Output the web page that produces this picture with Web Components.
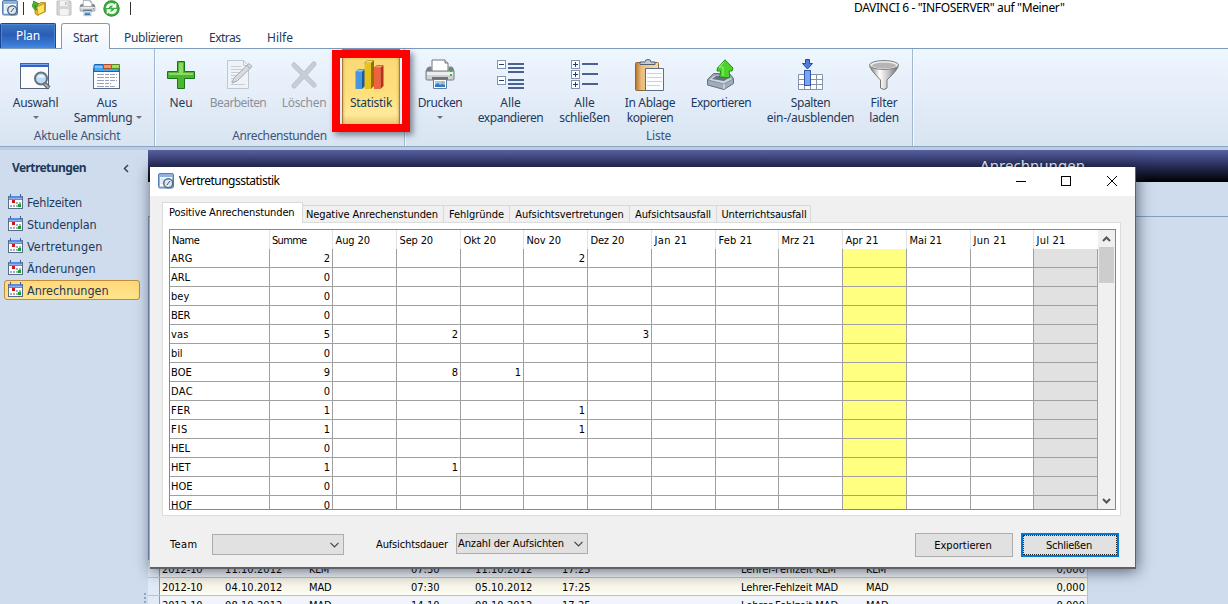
<!DOCTYPE html>
<html lang="de">
<head>
<meta charset="utf-8">
<title>DAVINCI 6</title>
<style>
html,body{margin:0;padding:0;width:1228px;height:604px;overflow:hidden;background:#fff;font-family:"Noto Sans","Open Sans",sans-serif;font-size:12px;color:#1e395b}
</style>
</head>
<body>
<davinci-app></davinci-app>
<script>
const define=(name,html,setup)=>customElements.define(name,class extends HTMLElement{
  connectedCallback(){
    if(this.shadowRoot)return;
    const root=this.attachShadow({mode:'open'});
    const t=document.createElement('template');
    t.innerHTML=typeof html==='function'?html(this):html;
    root.append(t.content.cloneNode(true));
    if(setup)setup(this,root);
  }
});

/* A text run of a given width: letter spacing takes up the difference. */
define('fit-text','<style>:host{display:inline-block;white-space:pre;text-align:left}span{display:inline-block}</style><span><slot></slot></span>',(el,root)=>{
  const w=+el.getAttribute('w'),s=root.querySelector('span'),n=el.textContent.length;
  if(!w)return;
  const nat=s.getBoundingClientRect().width;
  s.style.letterSpacing=((w-nat)/n).toFixed(3)+'px';
  el.style.width=w+'px';
});

const printer=`<path d="M8 1h13l3 3v9H8z" fill="#fff" stroke="#6b7683"/><path d="M21 1v3h3" fill="#dfe6ee" stroke="#6b7683"/><path d="M5 8h2v4h18V8h3l2 4v8q0 1-1 1H3q-1 0-1-1v-8z" fill="#cfd1d4" stroke="#777b82"/><path d="M3 8.500h4v4H2zM25 8.500h4l1 4h-5z" fill="#7b7e84"/><path d="M3 13h26v3H3z" fill="#eceded"/><rect x="26" y="11" width="2" height="2" fill="#30c030"/><rect x="26" y="15" width="2" height="2" fill="#30c030"/><path d="M8 18h16v3H8z" fill="#6c717a"/><path d="M9.500 20.500h13v9h-13z" fill="#fff" stroke="#5a7fa8"/><path d="M11 22h10v6H11z" fill="#8fd0f5"/><path d="M11 28v-2l3-2 2 2 2-1 3 1v2z" fill="#3a78b8"/><circle cx="19" cy="23.500" r="1.200" fill="#f6a04a"/>`;
const ICONS={
select:`<rect x="1.500" y="4.500" width="28" height="25" fill="#fbfcfe" stroke="#54627c"/><rect x="1" y="4" width="29" height="4" fill="#3463c4"/><rect x="2" y="5" width="27" height="1" fill="#7fa5ee"/><path d="M25 24l5 5" stroke="#565c66" stroke-width="4.200"/><path d="M25 24l4.500 4.500" stroke="#b0b5bb" stroke-width="2"/><circle cx="22" cy="19.500" r="6" fill="#bcdcf5" stroke="#68707c" stroke-width="2"/><path d="M18 18q4-4 8 0-4 1-8 0" fill="#eef8ff"/>`,
collection:`<rect x="2.500" y="9.500" width="26" height="20" fill="#fdfdff" stroke="#566885"/><path d="M3 6.500q0-1 1-1h8v4h16v3H3z" fill="#48a5f4" stroke="#1b62b7"/><path d="M12.500 5.500h8v4h-8z" fill="#f79468" stroke="#a94d2c"/><path d="M20.500 5.500h8v4h-8z" fill="#a6dc60" stroke="#55882b"/><path d="M4 8h8" stroke="#b5e0ff"/><path d="M6 15.500h20M6 18.500h20M6 21.500h20M6 24.500h14M6 27.500h18" stroke="#97a3bd" stroke-dasharray="7 1 4 1 5 1"/>`,
plus:`<path d="M12.500 2.500h7v10h10v7h-10v10h-7v-10h-10v-7h10z" fill="#4fb52e" stroke="#15751a"/><path d="M14 4h4v10h10v2H4v-2h10z" fill="#9be272" opacity=".8"/>`,
edit:`<path d="M5.500 1.500h16l5 5v23h-21z" fill="#eff2f7" stroke="#c0c7d1"/><path d="M21.500 1.500v5h5" fill="none" stroke="#c0c7d1"/><path d="M9 7.500h10M9 10.500h13M9 13.500h13M9 16.500h12M9 19.500h9M9 22.500h5M9 25.500h14" stroke="#c7ced7"/><path d="M10 24l2-5L27 4.500l3 3-15 14.500z" fill="#d8dce1" stroke="#a3aab4"/><path d="M25 6.500l3 3" stroke="#9aa2ad"/>`,
del:`<path d="M6 6l20 20M26 5L6 27" stroke="#bcc0c8" stroke-width="5" stroke-linecap="round"/><path d="M6 6l20 20M26 5L6 27" stroke="#c9cdd4" stroke-width="3.500" stroke-linecap="round"/>`,
stats:`<path d="M1.500 13l3-2.500h6L8 13z" fill="#8fc8f4" stroke="#2c6fae" stroke-width=".6"/><path d="M1.500 13H8v17H1.500z" fill="#4a96de"/><path d="M8 13l3-2.500V27L8 30z" fill="#1c5999"/><path d="M10.500 4l3-2.500h6L17 4z" fill="#ffe573" stroke="#9c7c0c" stroke-width=".6"/><path d="M10.500 4H17v26h-6.500z" fill="#e6c21f"/><path d="M17 4l3-2.500V27l-3 3z" fill="#957200"/><path d="M20 9l3-2.500h6L27 9z" fill="#ff9b7c" stroke="#a63617" stroke-width=".6"/><path d="M20 9h6.500v21H20z" fill="#ef6240"/><path d="M26.500 9l3-2.500V27l-3 3z" fill="#b2331a"/>`,
printer,
expand:`<g fill="#fff" stroke="#8393b2"><rect x="2.500" y="1.500" width="8" height="8"/><rect x="2.500" y="17.500" width="8" height="8"/></g><path d="M4 5.500h5M4 21.500h5" stroke="#203f7b"/><path d="M13 5h16M13 9h16M13 13h16M13 21h16M13 25h16M13 29h16" stroke="#4a628f" stroke-width="2"/>`,
collapse:`<g fill="#fff" stroke="#8393b2"><rect x="2.500" y="1.500" width="8" height="8"/><rect x="2.500" y="11.500" width="8" height="8"/><rect x="2.500" y="21.500" width="8" height="8"/></g><path d="M4 5.500h5M6.500 3v5M4 15.500h5M6.500 13v5M4 25.500h5M6.500 23v5" stroke="#203f7b"/><path d="M13 5h16M13 15h16M13 25h16" stroke="#4a628f" stroke-width="2"/>`,
clip:`<defs><linearGradient id="c"><stop offset="0" stop-color="#b3732b"/><stop offset=".25" stop-color="#e9bd7c"/><stop offset="1" stop-color="#f4dcae"/></linearGradient></defs><rect x="1.500" y="3.500" width="23" height="28" rx="1" fill="url(#c)" stroke="#8d6837"/><path d="M6 5.500V3h5q0-2.500 3-2.500t3 2.500h4v2.500z" fill="#c5cbd3" stroke="#555e69"/><path d="M11.500 9.500h18v22h-18z" fill="#fcfdff" stroke="#5c6c86"/><path d="M13 14.500h15M13 18.500h15M13 22.500h15M13 26.500h13" stroke="#cdd3dc"/>`,
export:`<path d="M2.500 20.500l6-6h16l4 5v5L19 30.500 2.500 26z" fill="#9eacbd" stroke="#65717f"/><path d="M3 21l16 4 9-5-5-4H9z" fill="#cdd6e0" stroke="#758291" stroke-width=".8"/><path d="M7 20l4-3h10l3 2-5 3z" fill="#66727f"/><path d="M19 25v5" stroke="#e6ecf2"/><path d="M20 .8L28 9l-1 3h-3q1 4 .5 7l-10-1q1-3 1-6H12l.5-3z" fill="#4ed12b" stroke="#1d8d1c"/><path d="M19 3l-5 5h4v9" fill="none" stroke="#a3f17c"/>`,
columns:`<path d="M3.500 15.500h24v15h-24zM3.500 20.500h24M3.500 25.500h24M9.500 15.500v15M15.500 15.500v15M21.500 15.500v15" fill="#fff" stroke="#8393ac"/><rect x="9.500" y="11.500" width="6" height="15" fill="#7ba4f1" stroke="#3157a8"/><path d="M10.500 .5h4v4h3L12.500 10l-5-5.500h3z" fill="#4d7ddc" stroke="#234a9f"/>`,
filter:`<defs><linearGradient id="f"><stop offset="0" stop-color="#777"/><stop offset=".35" stop-color="#fff"/><stop offset=".65" stop-color="#c3c3c3"/><stop offset="1" stop-color="#666"/></linearGradient></defs><path d="M1.500 6q0 4 11 15v8q3.500 3 6.500 0v-8Q30.500 10 30.500 6z" fill="url(#f)" stroke="#777"/><ellipse cx="16" cy="6" rx="14.500" ry="4.500" fill="#ededed" stroke="#808080"/><ellipse cx="16" cy="6.500" rx="12" ry="3" fill="#b5b5b5"/>`,
clock:`<rect x="1" y="1" width="30" height="29" rx="3" fill="#8db4e0" stroke="#5680b2" stroke-width="2"/><path d="M4 8h24v19H4z" fill="#f7fbff"/><path d="M5 12h8M5 16h8M5 20h8" stroke="#c7d7e8" stroke-width="2"/><circle cx="20.500" cy="20.500" r="9" fill="#d8e8f6" stroke="#55697f" stroke-width="3"/><path d="M20 21l4-5M20 21l-2 3" stroke="#40536a" stroke-width="2"/>`,
folder:`<path d="M8 10l4-3h5l2-2h10v18l-16 8-5-4z" fill="#e6b729" stroke="#ad7d0b" stroke-width="1.500"/><path d="M12 14l15-7v16l-13 7z" fill="#ffe56a" stroke="#b88b12" stroke-width="1.500"/><path d="M8 20Q-1 11 5 6V2l10 5-5 8-2-4q-1 3 4 8z" fill="#49b72c" stroke="#277c14" stroke-width="1.300"/>`,
save:`<path d="M2 2h26l2 2v26H2z" fill="#d5d5d5" stroke="#c1c1c1" stroke-width="2"/><path d="M8 2h15v10H8zM8 18h17v12H8z" fill="#f3f3f3"/><path d="M18 4h3v6h-3z" fill="#bcbcbc"/>`,
refresh:`<circle cx="16" cy="16" r="14.500" fill="#3cb044" stroke="#2f8f35" stroke-width="2"/><path d="M5.500 15q1-9 10-9.500 4 0 6.500 2.500l3-3v9.500H15.500l3.500-3.500q-5.500-2.500-8.500 4zM26.500 17q-1 9-10 9.500-4 0-6.500-2.500l-3 3v-9.500h9.500L13 21q5.500 2.500 8.500-4z" fill="#f4fff0"/>`,
calendar:`<rect x=".5" y="2.500" width="14" height="12" fill="#fff" stroke="#5a6b88"/><path d="M1 2h13v4H1z" fill="#5a8ae6"/><path d="M2.500 0v3M12.500 0v3" stroke="#3d5f9e"/><path d="M1 4.500h13" stroke="#8db1f2"/><path d="M8 8h2v2H8zM11 8h2v2h-2zM2 11h2v2H2zM5 11h2v2H5zM8 11h2v2H8z" fill="#a1adc0"/><path d="M4 6h3v3H4z" fill="#d31414"/><path d="M10 10h3v3h-3z" fill="#13a42b"/>`
};
define('ui-icon',el=>{
  const n=el.getAttribute('name'),s=el.getAttribute('size')||32,b=n==='calendar'?15:32;
  return `<style>:host{display:block;width:${s}px;height:${s}px;flex:none}svg{display:block}</style><svg width="${s}" height="${s}" viewBox="0 0 ${b} ${b}" fill="none">${ICONS[n]}</svg>`;
});

define('quick-bar',`<style>
:host{display:flex;height:23px;align-items:flex-start;background:#fff;color:#000}
i{width:1px;height:13px;margin-top:2px;background:#333}
fit-text{line-height:16px}</style>
<ui-icon name="clock" size="16" style="margin-left:2px"></ui-icon><i style="margin-left:5px"></i>
<ui-icon name="folder" size="16" style="margin-left:7px"></ui-icon>
<ui-icon name="save" size="16" style="margin-left:9px"></ui-icon>
<ui-icon name="printer" size="17" style="margin-left:7px"></ui-icon>
<ui-icon name="refresh" size="17" style="margin-left:7px"></ui-icon><i style="margin-left:10px"></i>
<fit-text w="210.500" style="margin-left:723px">DAVINCI 6 - "INFOSERVER" auf "Meiner"</fit-text>`);

define('ribbon-tabs',`<style>
:host{display:flex;height:26px;box-sizing:border-box;border-bottom:1px solid #7d9bbf;align-items:flex-end;position:relative;line-height:17px}
.plan{width:56px;height:25px;box-sizing:border-box;border:1px solid #1c4595;border-bottom:0;border-radius:2px 2px 0 0;background:linear-gradient(#3d75c2,#2a5eb4 45%,#3672cd 75%,#4188e0);color:#fff;text-align:center;padding:3px 0 0 0;box-shadow:inset 0 0 0 1px #4c85d0}
.start{width:49px;height:26px;margin:0 0 -1px 5px;box-sizing:border-box;border:1px solid #7d9bbf;border-bottom:0;border-radius:3px 3px 0 0;background:linear-gradient(#fff,#eef5fd);text-align:center;padding-top:5px}
.t{height:19px}</style>
<div class="plan"><fit-text w="24">Plan</fit-text></div><div class="start"><fit-text w="25">Start</fit-text></div>
<fit-text class="t" w="58.500" style="margin-left:14px">Publizieren</fit-text><fit-text class="t" w="31.500" style="margin-left:26.500px">Extras</fit-text><fit-text class="t" w="26" style="margin-left:26.500px">Hilfe</fit-text>`);

define('ribbon-button',el=>{
  const lines=el.getAttribute('lines').split('|').map(l=>l.split(':'));
  const drop=el.hasAttribute('drop');
  return `<style>
:host{display:flex;flex-direction:column;align-items:center;width:${el.getAttribute('width')}px;flex:none;box-sizing:border-box;padding-top:10px;height:77px;line-height:15px}
:host([off]){color:#8d9199}
:host([pressed]){margin:0 2px 0 3px;background:linear-gradient(#d9ad58,#fbd977 14%,#ffe17f 60%,#ffe99c 85%,#e5c268);border:1px solid #a97b39;border-width:1px 1px 0;box-shadow:inset 0 0 3px #b98a3a;padding-top:9px}
ui-icon{margin-bottom:4px}.row{display:flex;align-items:center}
.arrow{border:3px solid transparent;border-top-color:#68707b;border-bottom:0;width:0;height:0}
.row .arrow{margin:0 -10px 0 4px}.solo{margin-top:6px}
</style><ui-icon name="${el.getAttribute('icon')}"${el.hasAttribute('nudge')?' style="margin-left:-2px"':''}></ui-icon>`+
  lines.map((l,i)=>`<div class="row"${drop&&i===1?' style="margin-left:-8px"':''}><fit-text w="${l[1]}">${l[0]}</fit-text>${drop&&lines.length>1&&i===1?'<div class="arrow"></div>':''}</div>`).join('')+
  (drop&&lines.length===1?'<div class="arrow solo"></div>':'');
});
define('ribbon-group',el=>`<style>
:host{display:flex;flex-direction:column;width:${el.getAttribute('width')}px;height:97px;box-sizing:border-box;border-right:1px solid #a2b8d1;box-shadow:1px 0 #f4f9fe;flex:none}
.b{display:flex;height:77px}.l{color:#3e5478;text-align:center;line-height:17px;margin-top:1px}
</style><div class="b"><slot></slot></div><div class="l"><fit-text w="${el.getAttribute('lw')}">${el.getAttribute('label')}</fit-text></div>`);
define('main-ribbon',`<style>
:host{display:flex;position:relative;height:98px;box-sizing:border-box;border-bottom:1px solid #8ba4c1;background:linear-gradient(#eef6fe,#e5eef9 45%,#d8e4f1)}
.mark{position:absolute;left:332px;top:1px;width:78px;height:82px;box-sizing:border-box;border:8px solid #fe0000;box-shadow:3px 3px 6px rgba(40,50,70,.55)}
</style>
<ribbon-group width="155" label="Aktuelle Ansicht" lw="86.500">
<ribbon-button width="71" icon="select" lines="Auswahl:45.500" drop nudge></ribbon-button><ribbon-button width="72" icon="collection" lines="Aus:20.500|Sammlung:58.500" drop></ribbon-button></ribbon-group>
<ribbon-group width="250" label="Anrechenstunden" lw="94.500">
<ribbon-button width="52" icon="plus" lines="Neu:23"></ribbon-button><ribbon-button width="62" icon="edit" lines="Bearbeiten:56.500" off></ribbon-button><ribbon-button width="70" icon="del" lines="Löschen:44.500" off></ribbon-button><ribbon-button width="58" icon="stats" lines="Statistik:42" pressed nudge></ribbon-button></ribbon-group>
<ribbon-group width="508" label="Liste" lw="25">
<ribbon-button width="70" icon="printer" lines="Drucken:44.500" drop></ribbon-button><ribbon-button width="71" icon="expand" lines="Alle:20.500|expandieren:65.500"></ribbon-button><ribbon-button width="77" icon="collapse" lines="Alle:20.500|schließen:50.500"></ribbon-button><ribbon-button width="54" icon="clip" lines="In Ablage:50.500|kopieren:46.500"></ribbon-button><ribbon-button width="88" icon="export" lines="Exportieren:60.500"></ribbon-button><ribbon-button width="91" icon="columns" lines="Spalten:39.500|ein-/ausblenden:87.500"></ribbon-button><ribbon-button width="56" icon="filter" lines="Filter:27|laden:29.500"></ribbon-button></ribbon-group>
<div class="mark"></div>`);

define('nav-item',el=>`<style>
:host{display:flex;align-items:center;height:20px;width:136px;box-sizing:border-box;border:1px solid transparent;margin:0 0 2px 4px;padding-left:3px;font:12.500px/18px "DejaVu Sans Condensed","DejaVu Sans",sans-serif;font-stretch:condensed}
:host([active]){border-color:#c08b3c;border-radius:3px;background:linear-gradient(#ffd97a,#ffe48c)}
ui-icon{margin-top:-2px}fit-text{margin:2px 0 0 4px}</style><ui-icon name="calendar" size="15"></ui-icon><fit-text w="${el.getAttribute('w')}">${el.textContent}</fit-text>`);
define('side-nav',`<style>
:host{display:block;width:148px;flex:none;background:#cfdced;position:relative}
h2{display:flex;align-items:center;margin:0 0 11px;height:26px;padding:5px 0 0 12px;font-size:12px;line-height:18px;font-weight:bold}
svg{margin-left:37px}.grip{position:absolute;left:144px;top:443px;width:2px;height:14px;background:repeating-linear-gradient(#8fa4bf 0 2px,transparent 2px 4px)}
</style><h2><fit-text w="74">Vertretungen</fit-text><svg width="6" height="9" viewBox="0 0 6 9"><path d="M5 1L1.500 4.500 5 8" fill="none" stroke="#33455f" stroke-width="1.500"/></svg></h2>
<nav-item w="55">Fehlzeiten</nav-item><nav-item w="69.500">Stundenplan</nav-item><nav-item w="75.500">Vertretungen</nav-item><nav-item w="68.500">Änderungen</nav-item><nav-item w="81.500" active>Anrechnungen</nav-item><div class="grip"></div>`);

define('absence-row',el=>{
  const c=el.getAttribute('cells').split('|'),w=[40.5,57.5,22.500,28.500,57.5,28.500,97,22.500,28.500];
  if(c[2]==='KLM'){w[2]=w[7]=20;w[6]=95}
  return `<style>:host{display:grid;grid-template-columns:12px 63px 84px 102px 64px 87px 179px 125px 223px;width:940px;height:18px;flex:none;box-sizing:border-box;border-bottom:1px solid #a9c4e4;border-right:1px solid #a9c4e4;background:#f1f5fb;line-height:20px}
:host([warm]){background:linear-gradient(#f3f1e4,#fdfcf2)}
.h{background:#e1ebf7;border-right:1px solid #7f9dbf}div{height:17px}fit-text{margin-left:2px}.last{display:flex;justify-content:space-between}</style><div class="h"></div>`+
  c.slice(0,7).map((t,i)=>`<div><fit-text w="${w[i]}">${t}</fit-text></div>`).join('')+
  `<div class="last"><fit-text w="${w[7]}">${c[7]}</fit-text><fit-text w="${w[8]}" style="margin-right:2px">${c[8]}</fit-text></div>`;
});
define('absence-list',`<style>
:host{display:flex;flex-direction:column;flex:1;background:#cfdced}
header{height:32px;flex:none;background:linear-gradient(#5761a1,#2c3160 45%,#000);color:#fff;font-size:15px;line-height:30px;padding-left:832px;box-sizing:border-box}
.sub{height:34px;flex:none;border-bottom:1px solid #7f9fc3}.space{height:343px;flex:none;border-left:1px solid #7f9dbf}
.rows{font:11px/20px "DejaVu Sans Condensed","DejaVu Sans",sans-serif;font-stretch:condensed;color:#000}
</style><header><fit-text w="105">Anrechnungen</fit-text></header><div class="sub"></div><div class="space"></div>
<div class="rows"><absence-row cells="2012-10|11.10.2012|KLM|07:30|11.10.2012|17:25|Lehrer-Fehlzeit KLM|KLM|0,000"></absence-row><absence-row warm cells="2012-10|04.10.2012|MAD|07:30|05.10.2012|17:25|Lehrer-Fehlzeit MAD|MAD|0,000"></absence-row><absence-row cells="2012-10|08.10.2012|MAD|14:10|08.10.2012|17:25|Lehrer-Fehlzeit MAD|MAD|0,000"></absence-row></div>`);

const HEAD=[['Name',27],['Summe',34],['Aug 20',34],['Sep 20',33],['Okt 20',32],['Nov 20',34],['Dez 20',33],['Jan 21',32.5],['Feb 21',33.5],['Mrz 21',33],['Apr 21',32.5],['Mai 21',32],['Jun 21',32.5],['Jul 21',28.5]];
const ROWS=[['ARG',21,2,{5:2}],['ARL',18.500,0],['bey',18,0],['BER',18.500,0],['vas',17,5,{3:2,6:3}],['bil',11,0],['BOE',20.500,9,{3:8,4:1}],['DAC',21.500,0],['FER',19,1,{5:1}],['FIS',16.500,1,{5:1}],['HEL',18.500,0],['HET',19,1,{3:1}],['HOE',21,0],['HOF',21,0]];
define('stat-grid',`<style>
:host{display:flex;width:947px;height:281px;box-sizing:border-box;border:1px solid #828790;background:#fff;overflow:hidden;color:#000}
.g{width:928px;height:279px;overflow:hidden}.r{display:grid;grid-template-columns:100px 63px 64px 64px 63px 64px 64px 64px 63px 64px 64px 64px 63px 64px;height:19px}
.r>div{box-sizing:border-box;height:19px;border-right:1px solid #a0a0a0;border-bottom:1px solid #a0a0a0;line-height:18px;padding:1px 2px 0 1px;text-align:right}
.r>div:first-child{text-align:left}.r>div:nth-child(11){background:#ffff80}.r>div:nth-child(14){background:#e1e1e1}
.r.head>div{border-bottom:0;border-right-color:#e2e2e2;background:#fff;text-align:left;padding:2px 0 0 2px}
.r.head>div:nth-child(n+3){padding-left:2.500px}
.r.head>div:nth-child(14){border-color:#fff}
.s{width:17px;background:#f0f0f0;display:flex;flex-direction:column;align-items:center}.s svg{display:block;flex:none}.thumb{width:15px;height:36px;background:#cdcdcd;margin-bottom:auto}
</style><div class="g"><div class="r head">${HEAD.map(([t,w])=>`<div><fit-text w="${w+.5}">${t}</fit-text></div>`).join('')}</div>${ROWS.map(([n,w,s,v={}])=>`<div class="r"><div><fit-text w="${w+.5}">${n}</fit-text></div><div>${s}</div>${HEAD.slice(2).map((_,i)=>`<div>${v[i+2]??''}</div>`).join('')}</div>`).join('')}</div>
<div class="s"><svg width="17" height="17" viewBox="0 0 17 17"><path d="M5 11l3.500-3.500L12 11" fill="none" stroke="#555" stroke-width="2"/></svg><div class="thumb"></div><svg width="17" height="17" viewBox="0 0 17 17"><path d="M5 7l3.500 3.500L12 7" fill="none" stroke="#555" stroke-width="2"/></svg></div>`);

define('combo-box',`<style>:host{display:flex;align-items:center;justify-content:space-between;width:132px;height:21px;box-sizing:border-box;border:1px solid #adadad;background:#e1e1e1;padding:0 4px 0 1px;line-height:19px}</style><slot></slot><span></span><svg width="9" height="6" viewBox="0 0 9 6"><path d="M.5 .8l4 4 4-4" fill="none" stroke="#444" stroke-width="1.200"/></svg>`);
define('push-button',`<style>:host{display:block;width:98px;height:24px;box-sizing:border-box;border:1px solid #adadad;background:#e1e1e1;text-align:center;line-height:23px}
:host([focused]){border:2px solid #0078d7;line-height:19px}:host([focused]) div{outline:1px dotted #222;outline-offset:-1px;height:20px;line-height:21px}div{padding-right:2px}</style><div><slot></slot></div>`);

define('statistics-dialog',`<style>
:host{display:flex;flex-direction:column;position:absolute;left:150px;top:167px;width:986px;height:402px;box-sizing:border-box;border:solid #606268;border-width:0 1px 2px 0;background:#f0f0f0;color:#000;box-shadow:1px 2px 14px rgba(20,28,45,.65);font:11px/16px "DejaVu Sans Condensed","DejaVu Sans",sans-serif;font-stretch:condensed}
header{display:flex;height:29px;box-sizing:border-box;padding:0 0 2px 8px;flex:none;background:#fff;align-items:center;font:12px/17px "Noto Sans",sans-serif}
header fit-text{margin-left:5px}header svg{margin-left:735px}
.tabs{display:flex;align-items:flex-end;height:26px;padding-left:12px}
.tabs>div{height:17px;border:1px solid #d9d9d9;border-left:0;border-bottom:0;box-sizing:border-box;padding:1px 3px 0 3px;text-align:center;line-height:16px}
.tabs>div.on{height:21px;width:141px;border-left:1px solid #d9d9d9;background:#fff;margin-bottom:-1px;position:relative;line-height:16px;padding:2px 0 0 6px;text-align:left}
.panel{height:294px;width:959px;margin-left:12px;box-sizing:border-box;border:1px solid #dcdcdc;background:#fff;padding:6px 0 0 6px}
footer{display:flex;padding:17px 0 0 20px;align-items:flex-start}
</style>
<header><ui-icon name="clock" size="16"></ui-icon><fit-text w="100.500">Vertretungsstatistik</fit-text>
<svg width="104" height="12" viewBox="0 0 104 12" fill="none" stroke="#000"><path d="M1 6.500h10M92 1l10 10M102 1L92 11"/><rect x="46.500" y="1.500" width="9" height="9"/></svg></header>
<div class="tabs"><div class="on"><fit-text w="125.500">Positive Anrechenstunden</fit-text></div><div style="width:141px;padding-right:5px"><fit-text w="132">Negative Anrechenstunden</fit-text></div><div style="width:66px"><fit-text w="55">Fehlgründe</fit-text></div><div style="width:120px"><fit-text w="108.500">Aufsichtsvertretungen</fit-text></div><div style="width:87px"><fit-text w="76">Aufsichtsausfall</fit-text></div><div style="width:94px;padding-right:2px"><fit-text w="85">Unterrichtsausfall</fit-text></div></div>
<div class="panel"><stat-grid></stat-grid></div>
<footer><fit-text w="27.500" style="margin-top:4px">Team</fit-text><combo-box style="margin:1px 0 0 14.500px"></combo-box><fit-text w="72" style="margin:4px 0 0 32px">Aufsichtsdauer</fit-text><combo-box style="margin-left:8px"><fit-text w="106">Anzahl der Aufsichten</fit-text></combo-box>
<push-button style="margin-left:327px"><fit-text w="57.500">Exportieren</fit-text></push-button><push-button focused style="margin-left:8px"><fit-text w="46">Schließen</fit-text></push-button></footer>`);

define('davinci-app',`<style>
:host{display:flex;flex-direction:column;position:relative;width:1228px;height:604px;overflow:hidden;background:#fff}
.strip{height:3px;flex:none;background:#bccde2}.body{display:flex;flex:none;height:454px;overflow:hidden}
</style><quick-bar></quick-bar><ribbon-tabs></ribbon-tabs><main-ribbon></main-ribbon><div class="strip"></div>
<div class="body"><side-nav></side-nav><absence-list></absence-list></div><statistics-dialog></statistics-dialog>`);
</script>
</body>
</html>
